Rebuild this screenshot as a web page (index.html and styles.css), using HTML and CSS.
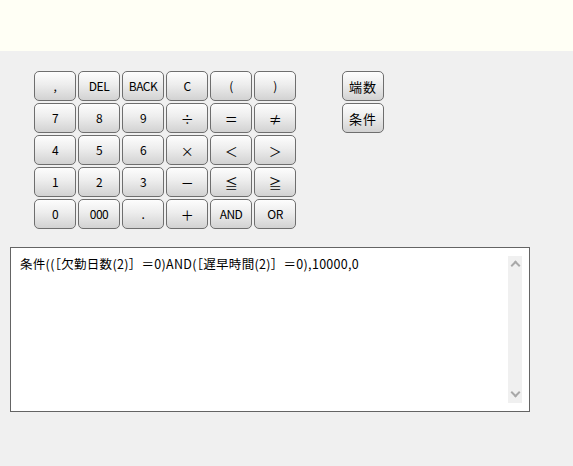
FILE: index.html
```html
<!DOCTYPE html>
<html lang="ja">
<head>
    <meta charset="UTF-8">
    <title>計算式</title>
    <link rel="stylesheet" href="styles.css">
</head>
<body>
    <div class="top-band"></div>
    <div class="panel">
        <div class="keys">
            <div class="keypad">
                <button class="key">,</button>
                <button class="key">DEL</button>
                <button class="key">BACK</button>
                <button class="key">C</button>
                <button class="key">(</button>
                <button class="key">)</button>
                <button class="key">7</button>
                <button class="key">8</button>
                <button class="key">9</button>
                <button class="key sym">÷</button>
                <button class="key sym">＝</button>
                <button class="key sym">≠</button>
                <button class="key">4</button>
                <button class="key">5</button>
                <button class="key">6</button>
                <button class="key sym">×</button>
                <button class="key sym">＜</button>
                <button class="key sym">＞</button>
                <button class="key">1</button>
                <button class="key">2</button>
                <button class="key">3</button>
                <button class="key sym">－</button>
                <button class="key sym">≦</button>
                <button class="key sym">≧</button>
                <button class="key">0</button>
                <button class="key">000</button>
                <button class="key">.</button>
                <button class="key sym">＋</button>
                <button class="key">AND</button>
                <button class="key">OR</button>
            </div>
            <div class="func-keys">
                <button class="key func">端数</button>
                <button class="key func">条件</button>
            </div>
        </div>
        <div class="formula">
            <div class="formula-text">条件((［欠勤日数(2)］＝0)AND(［遅早時間(2)］＝0),10000,0</div>
            <div class="scrollbar">
                <span class="arrow up"></span>
                <span class="arrow down"></span>
            </div>
        </div>
    </div>
</body>
</html>
```
FILE: styles.css
```css
body {
    margin: 0;
    background-color: #F0F0F0;
    font-family: "Noto Sans CJK JP", "DejaVu Sans", sans-serif;
    width: 573px;
    height: 466px;
    overflow: hidden;
}
.top-band {
    height: 51px;
    background-color: #FFFFF5;
}
.panel {
    padding: 20px 0 0 10px;
}
.keys {
    display: flex;
    padding-left: 24px;
    gap: 46px;
}
.keypad {
    display: grid;
    grid-template-columns: repeat(6, 42px);
    grid-auto-rows: 30px;
    column-gap: 2px;
    row-gap: 2px;
}
.func-keys {
    display: grid;
    grid-template-columns: 42px;
    grid-auto-rows: 30px;
    row-gap: 2px;
    align-content: start;
}
.key {
    margin: 0;
    padding: 0;
    border: 1px solid #6E6E6E;
    border-radius: 5px;
    background: linear-gradient(#FDFDFD 0%, #EDEDED 45%, #D2D2D2 100%);
    font-family: "Noto Sans CJK JP", "DejaVu Sans", sans-serif;
    font-size: 12px;
    color: #000;
    letter-spacing: -0.5px;
    line-height: 1;
}
.sym {
    font-size: 13px;
}
.func {
    font-size: 13px;
    letter-spacing: 1px;
}
.formula {
    margin-top: 18px;
    width: 518px;
    height: 163px;
    border: 1px solid #646464;
    background-color: #FFFFFF;
    display: flex;
    justify-content: space-between;
}
.formula-text {
    padding: 6px 0 0 9px;
    font-size: 12.5px;
    color: #000;
    letter-spacing: 0.3px;
    white-space: nowrap;
}
.scrollbar {
    margin: 8px 7px 8px 0;
    width: 14px;
    background-color: #F0F0F0;
    display: flex;
    flex-direction: column;
    justify-content: space-between;
    align-items: center;
}
.arrow {
    width: 5px;
    height: 5px;
    border-left: 2px solid #A8A8A8;
    border-top: 2px solid #A8A8A8;
}
.up {
    margin-top: 6px;
    transform: rotate(45deg);
}
.down {
    margin-bottom: 7px;
    transform: rotate(225deg);
}
```
